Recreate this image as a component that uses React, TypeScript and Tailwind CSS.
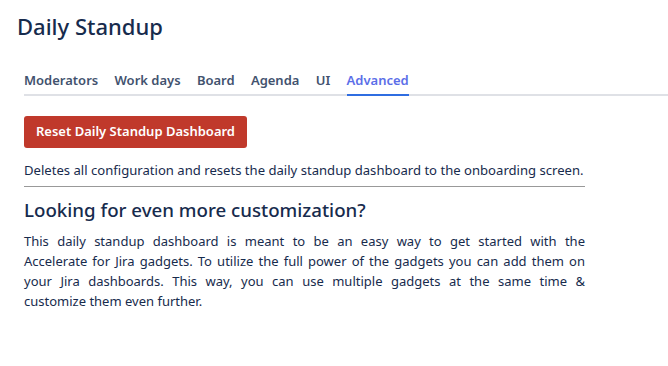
import React from "react";

const tabs = ["Moderators", "Work days", "Board", "Agenda", "UI", "Advanced"];

const lines = [
  "This daily standup dashboard is meant to be an easy way to get started with the",
  "Accelerate for Jira gadgets. To utilize the full power of the gadgets you can add them on",
  "your Jira dashboards. This way, you can use multiple gadgets at the same time &",
];

export default function App() {
  return (
    <div className="w-[668px] h-[366px] bg-white overflow-hidden" style={{ fontFamily: '"Noto Sans", sans-serif' }}>
      <div className="pl-[17px] pt-[11px]">
        <h1 className="text-[22px] leading-[30px] font-medium text-[#172b4d]">Daily Standup</h1>
      </div>
      <div className="ml-[24px] mt-[29px] flex gap-[16.3px] border-b-2 border-[#dfe1e6]">
        {tabs.map((t) => (
          <div
            key={t}
            className={
              "text-[13px] font-semibold leading-[20px] pb-[4px] -mb-[2px] border-b-2 " +
              (t === "Advanced" ? "text-[#5b6ee8] border-[#2f6de1]" : "text-[#42526e] border-transparent")
            }
          >
            {t}
          </div>
        ))}
      </div>
      <div className="ml-[24px] w-[561px]">
        <button className="mt-[20px] h-[32px] px-[12px] rounded-[3px] bg-[#c0392b] text-white text-[13px] font-semibold">
          Reset Daily Standup Dashboard
        </button>
        <p className="mt-[12px] text-[13.1px] leading-[20px] text-[#172b4d]">
          Deletes all configuration and resets the daily standup dashboard to the onboarding screen.
        </p>
        <hr className="mt-[6px] border-t border-[#999]" />
        <h2 className="mt-[10px] text-[18.7px] leading-[26px] font-medium text-[#172b4d]">
          Looking for even more customization?
        </h2>
        <div className="mt-[8px] text-[13px] leading-[20px] text-[#172b4d]">
          {lines.map((l) => (
            <p key={l} className="text-justify [text-align-last:justify]">
              {l}
            </p>
          ))}
          <p>customize them even further.</p>
        </div>
      </div>
    </div>
  );
}
